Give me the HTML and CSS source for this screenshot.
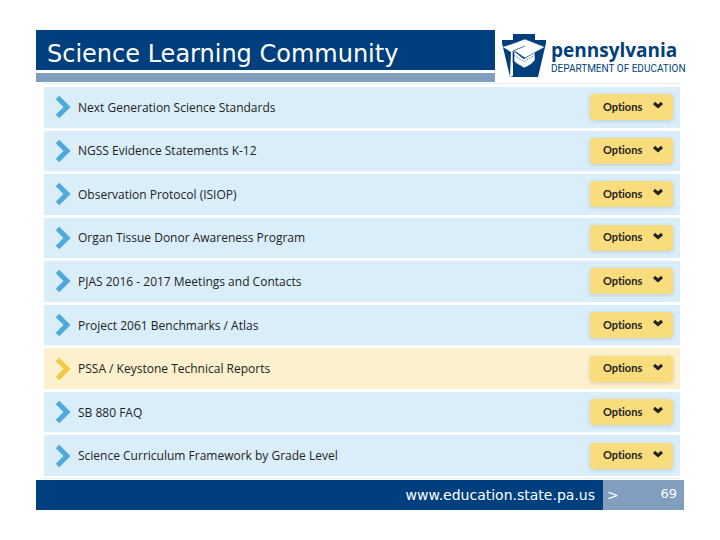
FILE: index.html
```
<!DOCTYPE html>
<html lang="en">
<head>
    <meta charset="UTF-8">
    <meta name="viewport" content="width=device-width, initial-scale=1.0">
    <title>Science Learning Community</title>
    <link rel="stylesheet" href="styles.css">
</head>
<body>
    <svg class="symbols" aria-hidden="true">
        <symbol id="arrow" viewBox="0 0 16 24">
            <path d="M2.5 2.5 L12 12 L2.5 21.5" fill="none" stroke="currentColor" stroke-width="5"/>
        </symbol>
        <symbol id="caret" viewBox="0 0 12 8">
            <path d="M2 2 L6 5.5 L10 2" fill="none" stroke="currentColor" stroke-width="3"/>
        </symbol>
    </svg>

    <header class="header">
        <div class="title">
            <h1>Science Learning Community</h1>
            <div class="title-bar"></div>
        </div>
        <div class="logo">
            <svg class="keystone" viewBox="0 0 46 46" aria-hidden="true">
                <path d="M12 1h22v6h11v3l-8 34H9L1 10V7h11z" fill="#003f7e"/>
                <path d="M13 18v10c2 3 6 4 10 7 5-2 9-5 11-8V18l-11 8z" fill="#fff" stroke="#003f7e" stroke-width="0.6"/>
                <path d="M13 22c3 3 7 4 10 7 3-3 8-4 11-8" fill="none" stroke="#003f7e" stroke-width="0.8" stroke-dasharray="1 1"/>
                <path d="M2 14L24 6l20 8-20 11-9-6z" fill="#fff" stroke="#003f7e" stroke-width="0.6"/>
                <path d="M2 14l11-3 9 2-10 6v24l-3 1 1-25z" fill="#fff"/>
                <path d="M24 13L12 18v12" fill="none" stroke="#003f7e" stroke-width="0.7"/>
            </svg>
            <div class="logo-text">
                <span class="state">pennsylvania</span>
                <span class="department">DEPARTMENT OF EDUCATION</span>
            </div>
        </div>
    </header>

    <main>
        <ul class="list">
            <li class="item">
                <svg class="arrow"><use href="#arrow"/></svg>
                <span class="name">Next Generation Science Standards</span>
                <button class="options">Options <svg class="caret"><use href="#caret"/></svg></button>
            </li>
            <li class="item">
                <svg class="arrow"><use href="#arrow"/></svg>
                <span class="name">NGSS Evidence Statements K-12</span>
                <button class="options">Options <svg class="caret"><use href="#caret"/></svg></button>
            </li>
            <li class="item">
                <svg class="arrow"><use href="#arrow"/></svg>
                <span class="name">Observation Protocol (ISIOP)</span>
                <button class="options">Options <svg class="caret"><use href="#caret"/></svg></button>
            </li>
            <li class="item">
                <svg class="arrow"><use href="#arrow"/></svg>
                <span class="name">Organ Tissue Donor Awareness Program</span>
                <button class="options">Options <svg class="caret"><use href="#caret"/></svg></button>
            </li>
            <li class="item">
                <svg class="arrow"><use href="#arrow"/></svg>
                <span class="name">PJAS 2016 - 2017 Meetings and Contacts</span>
                <button class="options">Options <svg class="caret"><use href="#caret"/></svg></button>
            </li>
            <li class="item">
                <svg class="arrow"><use href="#arrow"/></svg>
                <span class="name">Project 2061 Benchmarks / Atlas</span>
                <button class="options">Options <svg class="caret"><use href="#caret"/></svg></button>
            </li>
            <li class="item active">
                <svg class="arrow"><use href="#arrow"/></svg>
                <span class="name">PSSA / Keystone Technical Reports</span>
                <button class="options">Options <svg class="caret"><use href="#caret"/></svg></button>
            </li>
            <li class="item">
                <svg class="arrow"><use href="#arrow"/></svg>
                <span class="name">SB 880 FAQ</span>
                <button class="options">Options <svg class="caret"><use href="#caret"/></svg></button>
            </li>
            <li class="item">
                <svg class="arrow"><use href="#arrow"/></svg>
                <span class="name">Science Curriculum Framework by Grade Level</span>
                <button class="options">Options <svg class="caret"><use href="#caret"/></svg></button>
            </li>
        </ul>
    </main>

    <footer class="footer">
        <div class="site">www.education.state.pa.us</div>
        <div class="page">
            <span>&gt;</span>
            <span class="number">69</span>
        </div>
    </footer>
</body>
</html>
```
FILE: styles.css
```
body {
    margin: 0;
    padding: 30px 36px;
    background-color: #fff;
    font-family: "Open Sans", sans-serif;
    color: #222;
}
.symbols {
    display: none;
}
.header {
    display: flex;
    gap: 6px;
}
.title {
    flex: 1;
}
h1 {
    margin: 0 0 3px;
    padding: 8px 11px 0;
    background-color: #003f7e;
    color: #fff;
    font: 24px/32px "DejaVu Sans", sans-serif;
}
.title-bar {
    height: 9px;
    background-color: #819ebf;
}
.logo {
    display: flex;
    gap: 4px;
    width: 183px;
    padding-top: 3px;
    color: #003f7e;
}
.keystone {
    flex: none;
    width: 46px;
    height: 46px;
}
.logo-text {
    display: flex;
    flex-direction: column;
    padding-top: 4px;
    white-space: nowrap;
}
.state {
    font-size: 19px;
    line-height: 26px;
    font-weight: bold;
}
.department {
    font: 10px/12px Roboto, sans-serif;
}
.list {
    display: grid;
    grid-auto-rows: 1fr;
    gap: 3px;
    min-height: 389px;
    margin: 1px 4px 1px 8px;
    padding: 3px 0 2px;
    border-top: 1px solid #dbeefa;
    border-bottom: 1px solid #dbeefa;
    list-style: none;
}
.item {
    display: flex;
    align-items: center;
    padding: 0 7px 0 11px;
    background-color: #daeefa;
}
.item.active {
    background-color: #fdf0cc;
}
.arrow {
    width: 16px;
    height: 24px;
    margin-right: 7px;
    color: #4ea9df;
}
.active .arrow {
    color: #f3c844;
}
.name {
    flex: 1;
    font-size: 12px;
}
.options {
    display: flex;
    align-items: center;
    justify-content: space-between;
    width: 83px;
    height: 26px;
    padding: 0 9px 2px 13px;
    border: none;
    border-radius: 4px;
    background-color: #f9dc7c;
    box-shadow: 0 1px 4px rgba(0,0,0,0.15);
    color: #222;
    font: bold 11px Lato, sans-serif;
    font-variant-ligatures: none;
    cursor: pointer;
}
.caret {
    width: 12px;
    height: 8px;
    margin-bottom: 2px;
}
.footer {
    display: flex;
    color: #fff;
    font: 14px/30px "DejaVu Sans", sans-serif;
}
.site {
    flex: 1;
    padding-right: 8px;
    background-color: #003f7e;
    text-align: right;
}
.page {
    display: flex;
    justify-content: space-between;
    width: 70px;
    padding: 0 7px 0 4px;
    background-color: #819ebf;
}
.number {
    font-size: 13px;
    line-height: 28px;
}
```
